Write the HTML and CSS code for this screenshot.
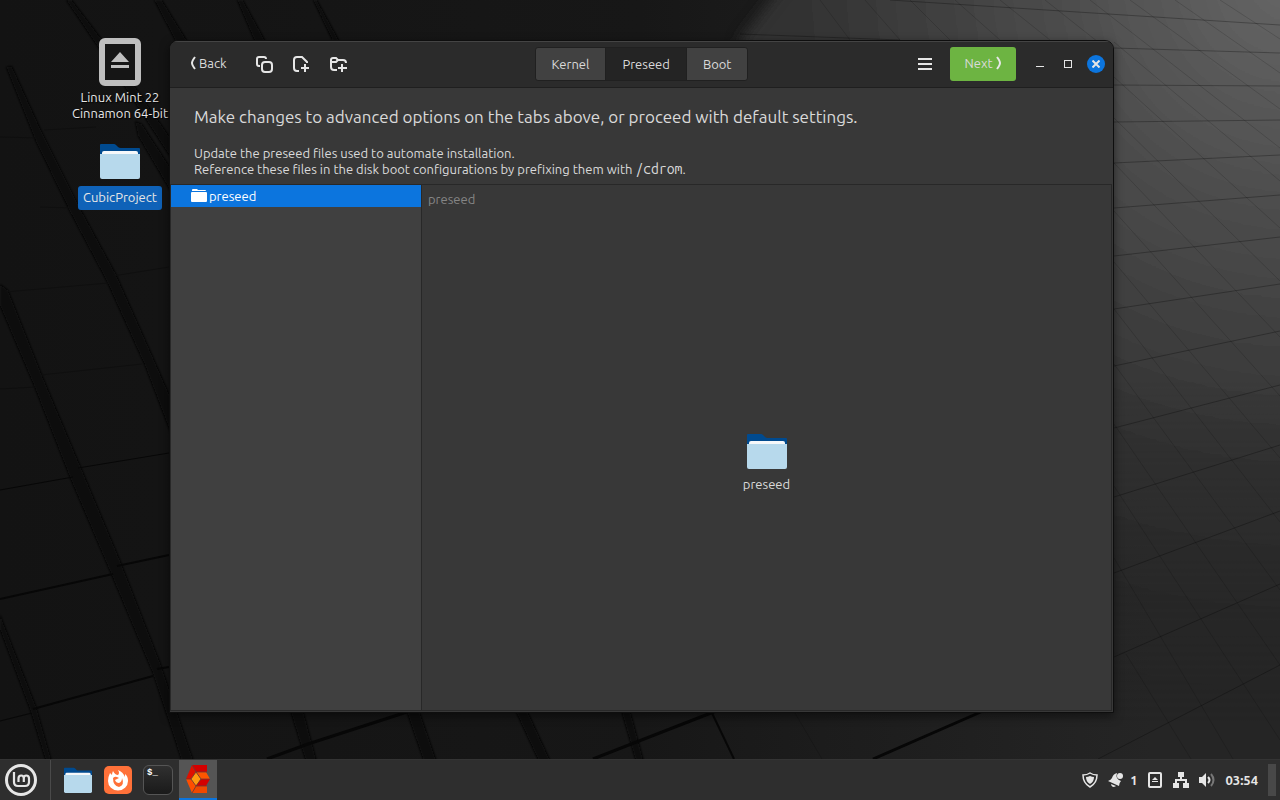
FILE: index.html
```html
<!DOCTYPE html>
<html lang="en">
<head>
  <meta charset="UTF-8">
  <meta name="viewport" content="width=device-width, initial-scale=1.0">
  <title>Cubic</title>
  <link rel="stylesheet" href="styles.css">
</head>
<body>
  <!-- shared folder icon -->
  <svg class="defs" aria-hidden="true">
    <symbol id="folder" viewBox="0 0 40 36">
      <path d="M0 2Q0 1 1 1H14Q15 1 16 2L18 4Q19 5 21 5H39Q40 5 40 6V20H0Z" fill="#004a8f"/>
      <path d="M2 10Q2 8 4 8H36Q38 8 38 10V20H2Z" fill="#f6f8fa"/>
      <path d="M0 11H40V34Q40 36 38 36H2Q0 36 0 34Z" fill="#b7d9ec"/>
    </symbol>
  </svg>

  <main class="desktop">
    <svg class="wallpaper" viewBox="0 0 1280 759" preserveAspectRatio="none" aria-hidden="true">
      <defs>
        <linearGradient id="base" x1="0" x2="1">
          <stop offset="0" stop-color="#131313"/>
          <stop offset="0.5" stop-color="#171717"/>
          <stop offset="0.9" stop-color="#252525"/>
        </linearGradient>
        <radialGradient id="glow" gradientUnits="userSpaceOnUse" cx="1290" cy="-20" r="780">
          <stop offset="0" stop-color="#666"/>
          <stop offset="0.3" stop-color="#4c4c4c"/>
          <stop offset="0.6" stop-color="#343434"/>
          <stop offset="1" stop-color="#252525"/>
        </radialGradient>
        <linearGradient id="fade" x1="0" y1="0" x2="0" y2="1">
          <stop offset="0.5" stop-color="#fff"/>
          <stop offset="0.95" stop-color="#000"/>
        </linearGradient>
        <mask id="fadeMask"><rect width="1280" height="759" fill="url(#fade)"/></mask>
        <filter id="soft" x="-20%" y="-20%" width="140%" height="140%"><feGaussianBlur stdDeviation="7"/></filter>
        <filter id="edge"><feGaussianBlur stdDeviation="1"/></filter>
      </defs>
      <rect width="1280" height="759" fill="url(#base)"/>
      <g mask="url(#fadeMask)">
        <path d="M786 -20L740 40L700 800H1320V-20Z" fill="url(#glow)" filter="url(#soft)"/>
      </g>
      <g fill="#070707" filter="url(#edge)">
        <path d="M66 0H72L104 42L136 88L172 140V160L128 92Z"/>
        <path d="M154 0H162L188 42H176ZM237 0H243L266 42H255ZM313 0H317L340 42H333Z"/>
        <path d="M135 121L142 124L172 170V194L138 136Z"/>
        <path d="M6 67L12 66L42 132L78 204L116 274L153 357L174 405V442L145 366L107 282L70 212L36 142Z"/>
        <path d="M0 284L8 290L42 375L80 465L120 560L160 662L194 762H182L153 674L111 574L70 478L34 386L0 306Z"/>
        <path d="M0 614L36 706L52 762H46L30 710L0 630Z"/>
        <path d="M290 710H303L317 762H306ZM406 710H419L437 762H424ZM515 710H527L551 762H539ZM621 710H630L644 762H636Z"/>
      </g>
      <g fill="none" stroke="#070707" stroke-width="2">
        <path d="M0 599L113 574M117 566L169 555M33 709L153 676M157 669L169 667"/>
        <path d="M267 759L308 744L410 711M593 759L716 711M873 759L983 711" stroke-width="3"/>
        <path d="M711 711L734 759"/>
        <path d="M0 490L73 477M78 468L169 453M0 721L32 713" stroke-width="1"/>
        <path d="M0 137L40 138M44 130L96 127M5 292L108 283M0 389L36 387M41 375L142 364M40 207L72 208M113 276L169 267" stroke="#0f0f0f" stroke-width="1"/>
      </g>
      <g fill="none" stroke="#000" stroke-opacity=".28">
        <path d="M1098 759L1280 665M1114 657L1280 584M1114 573L1280 511M1114 497L1280 445M1114 428L1280 385M1114 366L1280 331M1114 309L1280 284M1114 256L1280 237M1114 208L1280 195M1114 163L1280 155M1114 122L1280 120M1114 85L1280 86M1114 48L1280 53M890 0L1280 25M740 34L900 40"/>
      </g>
      <g fill="none" stroke="#000" stroke-opacity=".15">
        <path d="M1126 654L1191 759M1114 558L1233 759M1114 486L1280 740M1114 424L1280 665M1114 364L1280 590M1114 309L1280 522M1114 262L1280 458M1114 211L1280 396M1114 163L1280 337M1114 118L1280 281M1114 77L1280 228M1114 42L1280 181M1090 0L1280 148M1130 0L1280 109M1175 0L1280 73M1220 0L1280 39M1045 0L1098 42M1000 0L1050 40M955 0L1000 40M910 0L950 40M865 0L900 40M820 0L850 40M795 713L822 759"/>
      </g>
    </svg>

    <div class="desktop-icons">
      <a class="shortcut" href="#">
        <svg width="42" height="48" viewBox="0 0 42 48"><rect x="3" y="3" width="36" height="42" rx="3" fill="#151515" stroke="#bebebe" stroke-width="6"/><path d="M12 24L21 14L30 24ZM12 27H30V30H12Z" fill="#bebebe"/></svg>
        <span>Linux Mint 22<br>Cinnamon 64-bit</span>
      </a>
      <a class="shortcut" href="#">
        <svg width="40" height="36"><use href="#folder"/></svg>
        <span class="selected">CubicProject</span>
      </a>
    </div>

    <section class="window">
      <header class="titlebar">
        <div class="tools">
          <button class="back"><svg width="7" height="14" viewBox="0 0 7 14"><path d="M5 1Q2 5 2 7Q2 9 5 13"/></svg>Back</button>
          <button class="tool" aria-label="Copy"><svg width="18" height="18" viewBox="0 0 18 18"><path d="M5 11H4Q2 11 2 9V4Q2 2 4 2H9Q11 2 11 4"/><rect x="7" y="7" width="10" height="10" rx="3"/></svg></button>
          <button class="tool" aria-label="New file"><svg width="18" height="18" viewBox="0 0 18 18"><path d="M7 16H5Q2 16 2 13V5Q2 2 5 2H10L15 7V8M13 9V17M9 13H17"/></svg></button>
          <button class="tool" aria-label="New folder"><svg width="18" height="18" viewBox="0 0 18 18"><path d="M8 15H5Q2 15 2 12V5Q2 3 4 3H7L9 5H14Q17 5 17 8M2 7H7L9 5M13 9V17M9 13H18"/></svg></button>
        </div>
        <nav class="tabs">
          <button>Kernel</button>
          <button class="active">Preseed</button>
          <button>Boot</button>
        </nav>
        <div class="controls">
          <button class="menu" aria-label="Menu"><svg width="14" height="12" viewBox="0 0 14 12"><path d="M0 1H14M0 6H14M0 11H14"/></svg></button>
          <button class="next">Next<svg width="7" height="14" viewBox="0 0 7 14"><path d="M2 1Q5 5 5 7Q5 9 2 13"/></svg></button>
          <div class="window-buttons">
            <button aria-label="Minimize"><svg width="8" height="8" viewBox="0 0 8 8"><path d="M0 6.5H8" stroke-width="1"/></svg></button>
            <button aria-label="Maximize"><svg width="8" height="8" viewBox="0 0 8 8"><rect x=".5" y=".5" width="7" height="7" stroke-width="1"/></svg></button>
            <button class="close" aria-label="Close"><svg width="8" height="8" viewBox="0 0 8 8"><path d="M.5 .5L7.5 7.5M7.5 .5L.5 7.5"/></svg></button>
          </div>
        </div>
      </header>

      <div class="intro">
        <h1>Make changes to advanced options on the tabs above, or proceed with default settings.</h1>
        <p>Update the preseed files used to automate installation.<br>
        Reference these files in the disk boot configurations by prefixing them with <code>/cdrom</code>.</p>
      </div>

      <div class="panes">
        <aside class="tree">
          <button class="tree-row"><svg width="16" height="14" viewBox="0 0 16 14"><path d="M1 1Q1 0 2 0H6L7 1H14Q15 1 15 2H1ZM0 4Q0 3 1 3H15Q16 3 16 4V12Q16 13 15 13H1Q0 13 0 12Z" fill="#fff"/></svg>preseed</button>
        </aside>
        <div class="preview">
          <div class="path">preseed</div>
          <div class="preview-item">
            <svg width="40" height="36"><use href="#folder"/></svg>
            <span>preseed</span>
          </div>
        </div>
      </div>
    </section>
  </main>

  <footer class="taskbar">
    <button class="start" aria-label="Menu"><svg width="32" height="32" viewBox="0 0 32 32" fill="none" stroke="#e6e6e6"><circle cx="16" cy="16" r="14.5" stroke-width="3"/><path d="M9 8V18Q9 22 13 22H20Q24 22 24 18V14.500Q24 11.500 21.200 11.500Q18.800 11.500 18.800 14.500V18M18.800 14.500Q18.800 11.500 16.200 11.500Q13.500 11.500 13.500 14.500V18" stroke-width="2.200"/></svg></button>
    <div class="launchers">
      <button class="launcher" aria-label="Files"><svg width="28" height="26" viewBox="0 0 40 36" preserveAspectRatio="none"><use href="#folder"/></svg></button>
      <button class="launcher" aria-label="Firefox"><svg width="28" height="28" viewBox="0 0 28 28"><rect width="28" height="28" rx="5" fill="#ff7139"/><path d="M6 7Q4 11 4 15A10 9.500 0 0 0 24 15Q24 10 21 8L21 11Q19 6 14 4Q16 7 14 9Q11 9 9 5Q8 7 8 9L6 7Z" fill="#fff"/><path d="M9 12Q11 10 13 11L15 12L11 14Q12 17 15 17Q18 16 18 12Q21 19 15 21Q9 20 9 12Z" fill="#ff7139"/></svg></button>
      <button class="launcher" aria-label="Terminal"><span class="terminal">$_</span></button>
      <button class="launcher running" aria-label="Cubic"><svg width="26" height="28" viewBox="0 0 26 28"><path d="M7 0H22V7H11Z" fill="#d40000"/><path d="M7 0L11 7L6 14H1Z" fill="#e01000"/><path d="M1 14H6L11 21L7 28Z" fill="#ff4e00"/><path d="M11 21H22V28H7Z" fill="#f04800"/><path d="M11 7L16 14L11 21L6 14Z" fill="#ff9a10"/><path d="M11 7H21L25 14H16Z" fill="#ff5500"/><path d="M16 14H25L21 21H11Z" fill="#d40000"/><path d="M7 0L11 7H22M1 14H6L11 7L16 14H25M6 14L11 21L7 28M16 14L11 21H22" fill="none" stroke="#6b3a32" stroke-width=".8"/></svg></button>
    </div>
    <div class="tray">
      <svg width="16" height="16" viewBox="0 0 16 16"><path d="M8 1Q11 3 15 3Q15 11 8 15Q1 11 1 3Q5 3 8 1Z" fill="none" stroke="#e6e6e6" stroke-width="1.500"/><path d="M8 4Q10 5 12 5Q12 10 8 12Q4 10 4 5Q6 5 8 4Z" fill="#e6e6e6"/></svg>
      <div class="notice"><svg width="16" height="16" viewBox="0 0 16 16" fill="#e6e6e6"><path d="M9 1Q5 2 4 6Q3 8 0 9L11 14Q11 11 13 9Q10 8 9 6Q8 4 9 1Z"/><path d="M3 12L8 14Q7 15 5 15Q3 14 3 12Z"/><circle cx="12" cy="4" r="3"/></svg>1</div>
      <svg width="16" height="16" viewBox="0 0 16 16"><rect x="2" y="1" width="12" height="14" rx="1" fill="none" stroke="#e6e6e6" stroke-width="2"/><path d="M5 8L8 5L11 8ZM5 9H11V10H5Z" fill="#e6e6e6"/></svg>
      <svg width="16" height="16" viewBox="0 0 16 16"><path d="M5 0H11V5H9V7H14V11H16V16H10V11H12V9H4V11H6V16H0V11H2V7H7V5H5Z" fill="#e6e6e6"/></svg>
      <svg width="16" height="16" viewBox="0 0 16 16"><path d="M0 5H3L7 1V15L3 11H0Z" fill="#e6e6e6"/><path d="M9 5Q12 8 9 11" fill="none" stroke="#e6e6e6" stroke-width="2"/><path d="M12 2Q17 8 12 14" fill="none" stroke="#777" stroke-width="2"/></svg>
      <time>03:54</time>
      <button class="show-desktop" aria-label="Show desktop"></button>
    </div>
  </footer>
</body>
</html>
```
FILE: styles.css
```css
* {
  box-sizing: border-box;
}
body {
  margin: 0;
  height: 100vh;
  display: flex;
  flex-direction: column;
  overflow: hidden;
  background: #151515;
  color: #dadada;
  font-family: "Ubuntu", "Noto Sans", sans-serif;
  font-size: 13px;
  line-height: 16px;
}
button {
  display: flex;
  align-items: center;
  justify-content: center;
  padding: 0;
  border: none;
  background: none;
  color: inherit;
  font: inherit;
}
svg {
  display: block;
  flex-shrink: 0;
}
.defs {
  position: absolute;
  width: 0;
  height: 0;
}

/* desktop */
.desktop {
  position: relative;
  flex: 1;
  min-height: 0;
}
.wallpaper {
  position: absolute;
  width: 100%;
  height: 100%;
}
.desktop-icons {
  position: absolute;
  top: 38px;
  left: 60px;
  width: 120px;
  display: flex;
  flex-direction: column;
  gap: 22px;
}
.shortcut {
  display: flex;
  flex-direction: column;
  align-items: center;
  gap: 3px;
  color: #e6e6e6;
  text-align: center;
  text-decoration: none;
  text-shadow: 1px 1px 1px #000;
  white-space: nowrap;
}
.shortcut .selected {
  margin-top: 4px;
  padding: 3px 5px 5px;
  border-radius: 3px;
  background: #0f62b8;
  text-shadow: none;
}

/* window */
.window {
  position: absolute;
  top: 40px;
  right: 166px;
  bottom: 46px;
  left: 169px;
  display: flex;
  flex-direction: column;
  border: 1px solid #0e0e0e;
  border-radius: 9px 9px 0 0;
  background: #383838;
  box-shadow: 0 3px 10px rgba(0, 0, 0, 0.5);
  overflow: hidden;
}
.titlebar {
  display: grid;
  grid-template-columns: 1fr auto 1fr;
  align-items: center;
  height: 47px;
  padding-bottom: 2px;
  border-top: 1px solid #444;
  border-bottom: 1px solid #1f1f1f;
  background: #2b2b2b;
}
.titlebar svg {
  fill: none;
  stroke: #e6e6e6;
  stroke-width: 2;
}
.tools, .controls, .window-buttons {
  display: flex;
  align-items: center;
}
.tools {
  gap: 19px;
  padding-left: 20px;
}
.back {
  gap: 2px;
  margin-right: 9px;
  padding-bottom: 2px;
}
.tabs {
  display: flex;
  border: 1px solid #202020;
  border-radius: 3px;
  background: #414141;
}
.tabs button {
  height: 32px;
  padding: 0 16px;
}
.tabs .active {
  border: solid #202020;
  border-width: 0 1px;
  background: #242424;
}
.controls {
  justify-content: flex-end;
  padding-right: 8px;
}
.menu {
  margin-right: 18px;
}
.next {
  gap: 2px;
  width: 66px;
  height: 34px;
  margin-right: 15px;
  padding-bottom: 2px;
  border-radius: 3px;
  background: #6db442;
}
.window-buttons {
  gap: 10px;
}
.window-buttons button {
  width: 18px;
  height: 18px;
  border-radius: 50%;
}
.window-buttons .close {
  background: #0c75de;
}
.intro {
  padding: 19px 24px 7px;
}
.intro h1 {
  margin: 0 0 18px;
  font-size: 17px;
  font-weight: 400;
  line-height: 20px;
}
.intro p {
  margin: 0;
}
.intro code {
  font-family: "Ubuntu Mono", "DejaVu Sans Mono", monospace;
  font-size: 14px;
  line-height: 1;
}
.panes {
  display: flex;
  flex: 1;
  margin: 0 1px 1px 0;
  border: 1px solid #282828;
}
.tree {
  width: 251px;
  border-right: 1px solid #282828;
  background: #404040;
}
.tree-row {
  justify-content: flex-start;
  gap: 2px;
  width: 100%;
  height: 22px;
  padding-left: 20px;
  background: #0c75de;
  color: #fff;
}
.preview {
  flex: 1;
  display: flex;
  flex-direction: column;
}
.path {
  padding: 6px;
  color: #858585;
}
.preview-item {
  flex: 1;
  display: flex;
  flex-direction: column;
  align-items: center;
  justify-content: center;
  gap: 7px;
  padding-top: 2px;
}

/* taskbar */
.taskbar {
  display: flex;
  align-items: center;
  height: 41px;
  border-top: 1px solid #343434;
  background: #2e2e2e;
}
.start {
  width: 51px;
  height: 40px;
  padding: 0 13px 0 5px;
  border-right: 1px solid #4a4a4a;
}
.launchers {
  display: flex;
  gap: 2px;
  margin-left: 8px;
}
.launcher {
  width: 38px;
  height: 40px;
}
.launcher.running {
  border-bottom: 2px solid #0c75de;
  background: #555;
}
.terminal {
  width: 30px;
  height: 30px;
  padding: 1px 3px;
  border: 1px solid #555;
  border-radius: 6px;
  background: linear-gradient(#303030, #1a1a1a);
  color: #fff;
  font: bold 9px/12px "Liberation Mono", monospace;
  text-align: left;
}
.tray {
  display: flex;
  align-items: center;
  gap: 10px;
  margin-left: auto;
  padding-right: 4px;
  color: #e6e6e6;
  font-weight: 600;
}
.notice {
  display: flex;
  align-items: center;
  gap: 6px;
}
.show-desktop {
  width: 8px;
  height: 32px;
  background: #484848;
}
```
